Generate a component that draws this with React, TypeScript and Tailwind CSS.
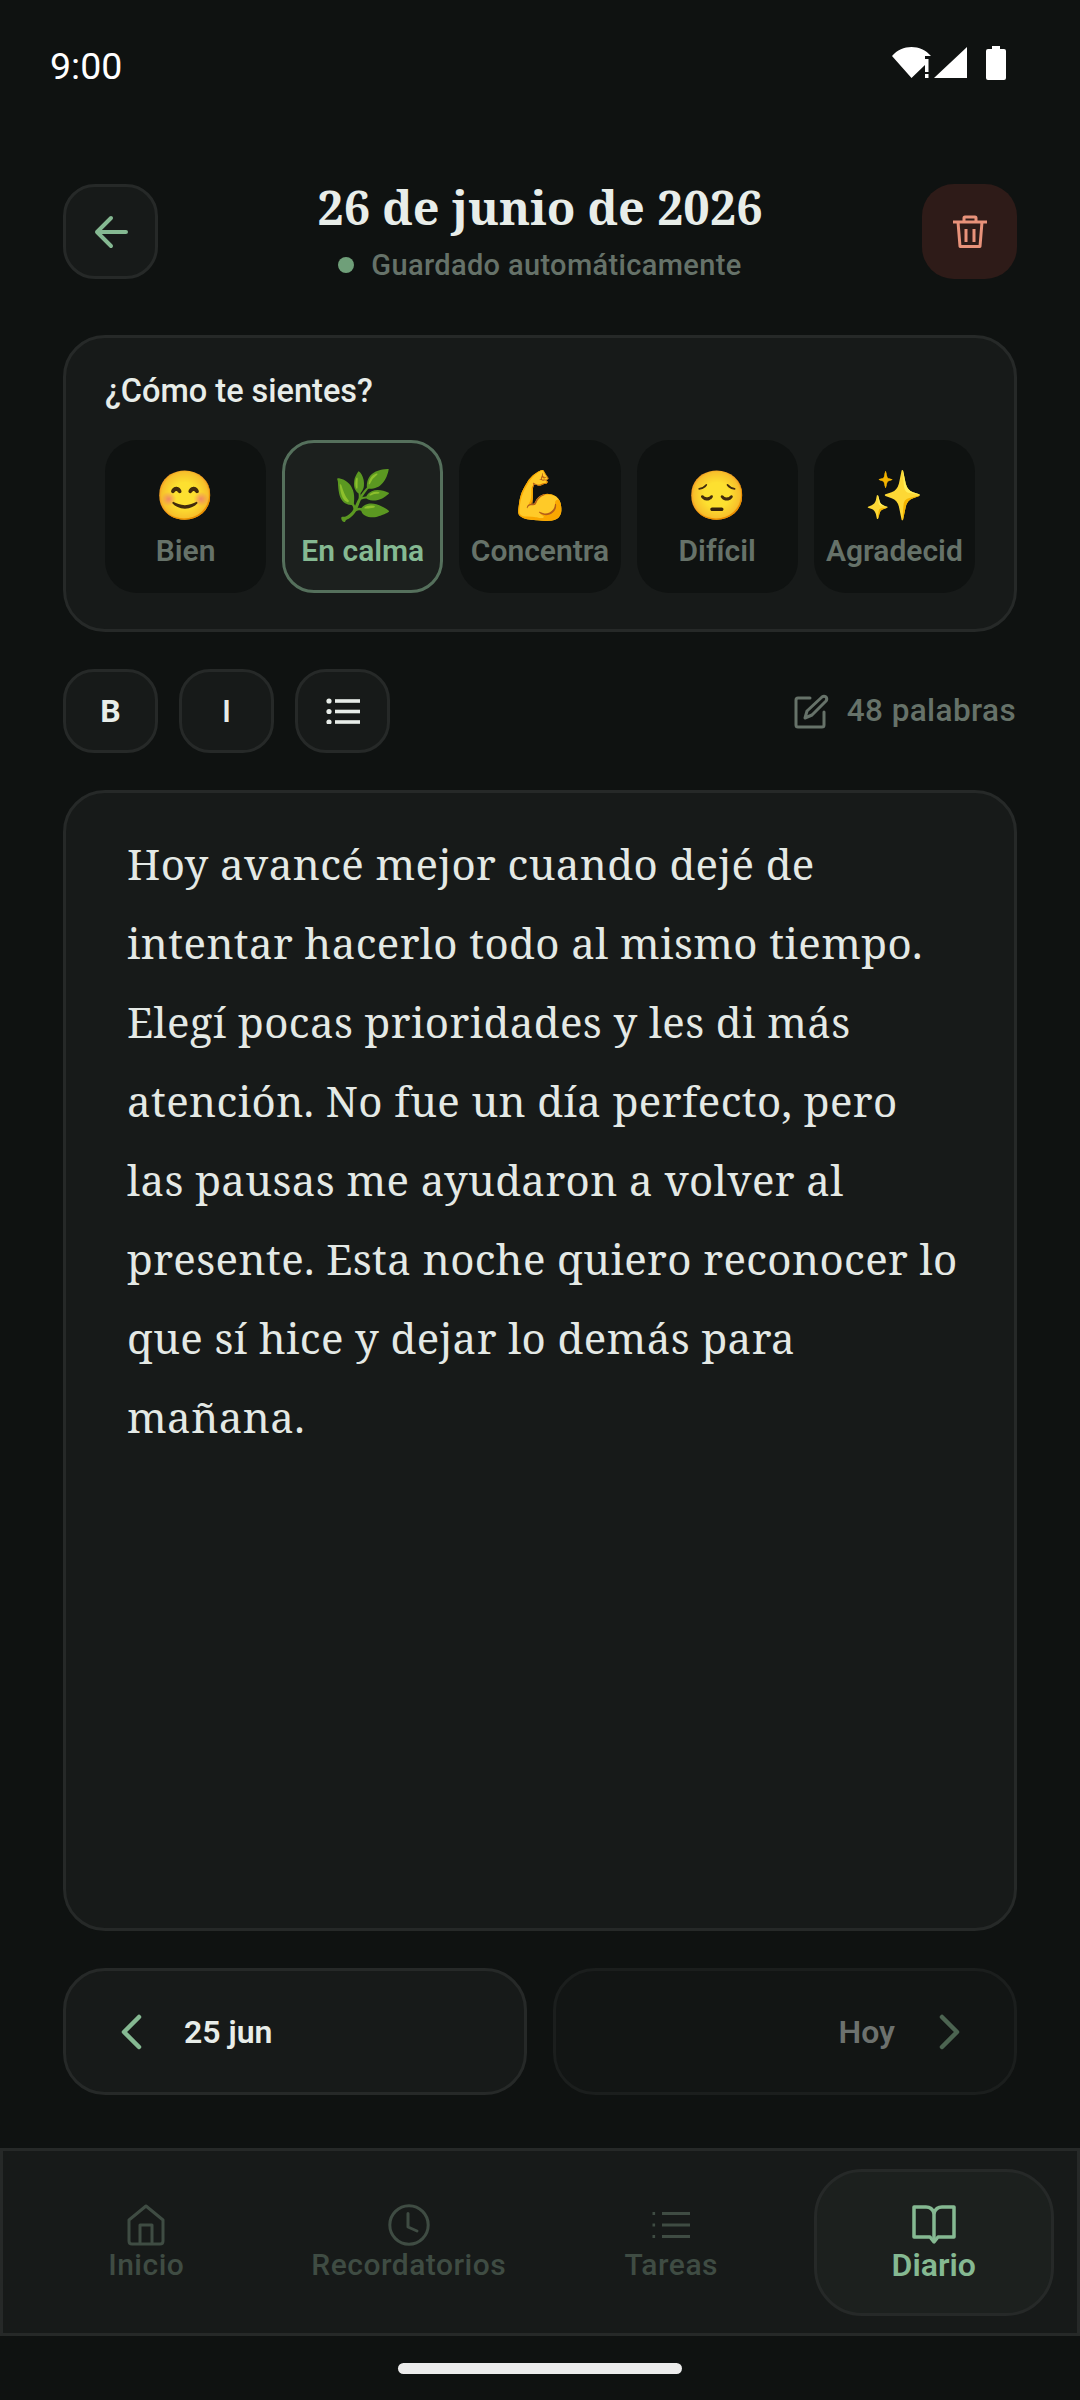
import React from 'react';

const moods = [
  { emoji: '😊', label: 'Bien' },
  { emoji: '🌿', label: 'En calma', active: true },
  { emoji: '💪', label: 'Concentra' },
  { emoji: '😔', label: 'Difícil' },
  { emoji: '✨', label: 'Agradecid' },
];

const lines = [
  'Hoy avancé mejor cuando dejé de',
  'intentar hacerlo todo al mismo tiempo.',
  'Elegí pocas prioridades y les di más',
  'atención. No fue un día perfecto, pero',
  'las pausas me ayudaron a volver al',
  'presente. Esta noche quiero reconocer lo',
  'que sí hice y dejar lo demás para',
  'mañana.',
];

function StatusIcons() {
  return (
    <svg width="116" height="36" viewBox="0 0 116 36" fill="white">
      <path d="M0 11 C10 -1 29 -1 39 11 L33 11 L33 20 L19.5 33 Z" />
      <rect x="33" y="14" width="3.5" height="13" />
      <rect x="33" y="29" width="3.5" height="4" />
      <path d="M42 33 L75 2 L75 33 Z" />
      <path d="M100 1 H108 V4 H112 Q114 4 114 6 V33 Q114 35 112 35 H96 Q94 35 94 33 V6 Q94 4 96 4 H100 Z" />
    </svg>
  );
}

function BackIcon() {
  return (
    <svg width="36" height="36" viewBox="0 0 36 36" fill="none" stroke="#85b992" strokeWidth="4" strokeLinecap="round" strokeLinejoin="round">
      <path d="M18 4 L4 18 L18 32 M4 18 H33" />
    </svg>
  );
}

function TrashIcon() {
  return (
    <svg width="36" height="34" viewBox="0 0 36 34" fill="none" stroke="#e8927a" strokeWidth="3" strokeLinejoin="round">
      <path d="M1 7 H35 M12 6 V3 Q12 2 13 2 H23 Q24 2 24 3 V6 M6 7 L8 31.5 H28 L30 7" />
      <path d="M14 14 V27 M22 14 V27" />
    </svg>
  );
}

function ListIcon() {
  return (
    <svg width="34" height="26" viewBox="0 0 34 26" fill="#e8ede9">
      <circle cx="3" cy="3" r="2.6" />
      <circle cx="3" cy="13.5" r="2.6" />
      <circle cx="3" cy="24" r="2.6" />
      <rect x="9" y="1.2" width="25" height="3.6" />
      <rect x="9" y="11.7" width="25" height="3.6" />
      <rect x="9" y="22.2" width="25" height="3.6" />
    </svg>
  );
}

function WriteIcon() {
  return (
    <svg width="35" height="35" viewBox="0 0 35 35" fill="none" stroke="#667269" strokeWidth="3" strokeLinejoin="round" strokeLinecap="round">
      <path d="M16 4 H4 Q2 4 2 6 V31 Q2 33 4 33 H28 Q30 33 30 31 V18" />
      <path d="M11 24 L13 17 L28 3 Q30 1.5 32 3 Q33.5 5 32 7 L18 21 Z" />
    </svg>
  );
}

function Chevron({ right, color }: { right?: boolean; color: string }) {
  return (
    <svg width="24" height="36" viewBox="0 0 24 36" fill="none" stroke={color} strokeWidth="4.5" strokeLinecap="round" strokeLinejoin="round">
      <path d={right ? 'M4 3 L19 18 L4 33' : 'M20 3 L5 18 L20 33'} />
    </svg>
  );
}

function HomeIcon() {
  return (
    <svg width="38" height="42" viewBox="0 0 38 42" fill="none" stroke="#3f4c43" strokeWidth="3" strokeLinejoin="round">
      <path d="M19 2 L36 16 V37 Q36 40 33 40 H5 Q2 40 2 37 V16 Z" />
      <path d="M13 40 V21 H25 V40" />
    </svg>
  );
}

function ClockIcon() {
  return (
    <svg width="42" height="42" viewBox="0 0 42 42" fill="none" stroke="#3f4c43" strokeWidth="3" strokeLinecap="round" strokeLinejoin="round">
      <circle cx="21" cy="21" r="19.2" />
      <path d="M20 9.5 V23 L29 27" />
    </svg>
  );
}

function TasksIcon() {
  return (
    <svg width="38" height="28" viewBox="0 0 38 28" fill="#3f4c43">
      <rect x="0.5" y="1" width="2.6" height="3" />
      <rect x="0.5" y="12.5" width="2.6" height="3" />
      <rect x="0.5" y="24" width="2.6" height="3" />
      <rect x="10" y="1" width="28" height="3" />
      <rect x="10" y="12.5" width="28" height="3" />
      <rect x="10" y="24" width="28" height="3" />
    </svg>
  );
}

function BookIcon() {
  return (
    <svg width="44" height="40" viewBox="0 0 44 40" fill="none" stroke="#85b992" strokeWidth="3.5" strokeLinejoin="round">
      <path d="M2 2 H14 Q20 2 22 8 Q24 2 30 2 H42 V32 H26 L22 37 L18 32 H2 Z" />
      <path d="M22 8 V34" />
    </svg>
  );
}

function ToolButton({ children }: { children: React.ReactNode }) {
  return (
    <button className="flex h-[84px] w-[95px] items-center justify-center rounded-[31px] border-[3px] border-[#262928] bg-[#171a19] text-[#e8ede9]">
      {children}
    </button>
  );
}

function NavItem({ icon, label }: { icon: React.ReactNode; label: string }) {
  return (
    <div className="flex flex-col items-center">
      <div className="flex h-[44px] items-center">{icon}</div>
      <span className="mt-[1px] text-[30px] font-medium leading-[34px] tracking-[0.5px] text-[#3f4c43]">{label}</span>
    </div>
  );
}

export default function App() {
  return (
    <div className="flex h-[2400px] w-[1080px] flex-col overflow-hidden bg-[#0f1211] font-['Roboto',sans-serif]">
      {/* status bar */}
      <div className="flex h-[110px] items-end justify-between pb-[22px] pl-[50px] pr-[72px]">
        <span className="text-[37.5px] leading-[44px] text-white">9:00</span>
        <div className="mb-[7px]"><StatusIcons /></div>
      </div>

      <div className="flex flex-1 flex-col px-[63px] pt-[74px]">
        {/* header */}
        <div className="flex h-[95px] items-center justify-between">
          <button className="flex h-[95px] w-[95px] items-center justify-center rounded-[32px] border-[3px] border-[#262928] bg-[#171a19]">
            <BackIcon />
          </button>
          <div className="flex flex-col items-center pb-[5px]">
            <h1 className="font-['Noto_Serif','DejaVu_Serif',serif] text-[46.8px] font-bold leading-[62px] text-[#e8ede9]">
              26 de junio de 2026
            </h1>
            <div className="mt-[9px] flex items-center gap-[17px]">
              <span className="h-[16px] w-[16px] rounded-full bg-[#6f9f79]" />
              <span className="text-[29px] font-medium leading-[36px] tracking-[0.35px] text-[#667269]">Guardado automáticamente</span>
            </div>
          </div>
          <button className="flex h-[95px] w-[95px] items-center justify-center rounded-[32px] bg-[#2e1b18]">
            <TrashIcon />
          </button>
        </div>

        {/* mood card */}
        <div className="mt-[56px] h-[297px] rounded-[42px] border-[3px] border-[#262928] bg-[#171a19] px-[39px] pt-[32px]">
          <p className="text-[32.5px] font-medium leading-[42px] text-[#e8ede9]">¿Cómo te sientes?</p>
          <div className="mt-[28px] grid grid-cols-5 gap-[16px]">
            {moods.map((m) => (
              <div
                key={m.label}
                className={
                  m.active
                    ? 'flex h-[153px] flex-col items-center overflow-hidden rounded-[32px] border-[3px] border-[#55705c] bg-[#1c201e] pt-[25px]'
                    : 'flex h-[153px] flex-col items-center overflow-hidden rounded-[32px] bg-[#0f1211] pt-[28px]'
                }
              >
                <span className="font-['Noto_Color_Emoji',sans-serif] text-[48px] leading-[56px]">{m.emoji}</span>
                <span className={`mt-[9px] whitespace-nowrap text-[30px] font-semibold leading-[36px] ${m.active ? 'text-[#85b992]' : 'text-[#667269]'}`}>
                  {m.label}
                </span>
              </div>
            ))}
          </div>
        </div>

        {/* toolbar */}
        <div className="mt-[37px] flex h-[84px] items-center">
          <div className="flex gap-[21px]">
            <ToolButton><span className="text-[32px] font-bold">B</span></ToolButton>
            <ToolButton><span className="text-[32px] font-medium">I</span></ToolButton>
            <ToolButton><ListIcon /></ToolButton>
          </div>
          <div className="ml-auto flex items-center gap-[18px] pr-[1px] text-[#667269]">
            <WriteIcon />
            <span className="text-[31.5px] font-medium tracking-[0.4px]">48 palabras</span>
          </div>
        </div>

        {/* editor */}
        <div className="mt-[37px] h-[1141px] rounded-[42px] border-[3px] border-[#262928] bg-[#171a19] pl-[61px] pt-[31px]">
          {lines.map((line) => (
            <p key={line} className="whitespace-nowrap font-['Noto_Serif','DejaVu_Serif',serif] text-[42px] leading-[79px] tracking-[0.4px] text-[#e4e9e5]">
              {line}
            </p>
          ))}
        </div>

        {/* previous / next */}
        <div className="mt-[37px] grid h-[127px] grid-cols-2 gap-[26px]">
          <button className="flex items-center rounded-[42px] border-[3px] border-[#262928] bg-[#171a19] pl-[53px]">
            <Chevron color="#85b992" />
            <span className="ml-[41px] text-[32px] font-semibold text-[#e8ede9]">25 jun</span>
          </button>
          <button className="flex items-center justify-end rounded-[42px] border-[3px] border-[#1b1e1d] bg-[#121514] pr-[52px]">
            <span className="mr-[43px] text-[32px] font-semibold text-[#6d716e]">Hoy</span>
            <Chevron right color="#4c6451" />
          </button>
        </div>
      </div>

      {/* bottom nav */}
      <div className="grid h-[188px] grid-cols-4 items-center border-[3px] border-[#262928] bg-[#171a19] px-[12px]">
        <NavItem label="Inicio" icon={<HomeIcon />} />
        <NavItem label="Recordatorios" icon={<ClockIcon />} />
        <NavItem label="Tareas" icon={<TasksIcon />} />
        <div className="flex h-[147px] w-[240px] flex-col items-center justify-center justify-self-center rounded-[48px] border-[3px] border-[#262928] bg-[#1c201e]">
          <div className="flex h-[44px] items-center"><BookIcon /></div>
          <span className="mt-[1px] text-[32px] font-semibold leading-[34px] text-[#85b992]">Diario</span>
        </div>
      </div>

      {/* home indicator */}
      <div className="flex h-[64px] justify-center pt-[27px]">
        <div className="h-[11px] w-[284px] rounded-full bg-[#ececec]" />
      </div>
    </div>
  );
}
